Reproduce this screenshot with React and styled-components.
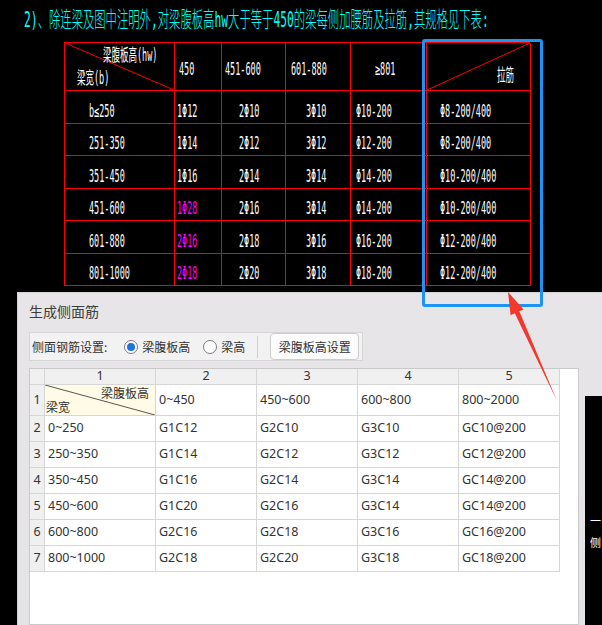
import React from 'react';
import styled, { createGlobalStyle } from 'styled-components';

const GlobalStyle = createGlobalStyle`
  html, body {
    margin: 0;
    padding: 0;
    background: #000;
  }
`;

const Root = styled.div`
  position: relative;
  width: 602px;
  height: 625px;
  overflow: hidden;
  background: #000;
  display: flex;
  flex-direction: column;
`;

// ---- CAD drawing part ----

const Title = styled.div`
  height: 42px;
  box-sizing: border-box;
  padding: 9px 0 0 24px;
  white-space: nowrap;
`;

const TitleText = styled.span`
  display: inline-block;
  font-family: "DejaVu Sans Mono", "Noto Sans CJK SC", monospace;
  font-size: 22px;
  line-height: 22px;
  font-weight: 300;
  color: #00ffff;
  transform: scaleX(0.515);
  transform-origin: left center;
`;

const CadTable = styled.div`
  margin-left: 64px;
  display: grid;
  grid-template-columns: 110px 47px 64px 65px 76px 104px;
  grid-template-rows: 48px repeat(6, 32.5px);
  width: 466px;
  border-top: 1px solid #ff0000;
  border-left: 1px solid #ff0000;
  box-sizing: border-box;
`;

const CadCell = styled.div`
  position: relative;
  display: flex;
  align-items: center;
  box-sizing: border-box;
  border-right: 1px solid #ff0000;
  border-bottom: 1px solid #ff0000;
  padding-left: ${p => p.$pl || 0}px;
  padding-top: ${p => p.$pt || 0}px;
  overflow: visible;
`;

const CadHeadCell = styled(CadCell)`
  flex-direction: column;
  align-items: flex-start;
  justify-content: flex-start;
`;

const CadText = styled.span`
  display: inline-block;
  font-family: "DejaVu Sans Mono", "Noto Sans CJK SC", monospace;
  font-size: 17px;
  line-height: 17px;
  color: ${p => p.$color || '#ffffff'};
  white-space: nowrap;
  transform: scaleX(0.5);
  transform-origin: left center;
  margin-left: ${p => p.$ml || 0}px;
  margin-top: ${p => p.$mt || 0}px;
`;

const Diagonal = styled.svg`
  position: absolute;
  left: 0;
  top: 0;
  width: 100%;
  height: 100%;
`;

// ---- dialog part ----

const Dialog = styled.div`
  margin: 6px 0 0 17px;
  width: 620px;
  flex: 1;
  box-sizing: border-box;
  background: linear-gradient(180deg, #e7e5e8 0%, #e4e3e5 100%);
  border-left: 1px solid #d2d2d2;
  border-top: 1px solid #d2d2d2;
  padding-left: 11px;
  font-family: "Noto Sans", "Noto Sans CJK SC", sans-serif;
  color: #333;
  display: flex;
  flex-direction: column;
`;

const DialogTitle = styled.div`
  font-size: 14px;
  line-height: 20px;
  padding-top: 8px;
  color: #3d3d3d;
  font-family: "Noto Sans CJK SC", sans-serif;
`;

const GroupBox = styled.div`
  margin-top: 11px;
  width: 334px;
  height: 29px;
  box-sizing: border-box;
  border: 1px solid #d6d6d6;
  background: #f3f2f3;
  display: flex;
  align-items: center;
  padding-left: 2px;
  font-size: 12px;
  font-family: "Noto Sans CJK SC", sans-serif;
`;

const Label = styled.span`
  margin-left: ${p => p.$ml || 0}px;
  white-space: nowrap;
`;

const Radio = styled.span`
  width: 14px;
  height: 14px;
  box-sizing: border-box;
  border-radius: 50%;
  border: 1px solid #7a7a7a;
  background: #fff;
  margin-left: ${p => p.$ml || 0}px;
  margin-right: 4px;
  display: flex;
  align-items: center;
  justify-content: center;
  &::after {
    content: '';
    width: 8px;
    height: 8px;
    border-radius: 50%;
    background: ${p => (p.$checked ? '#1f74e0' : 'transparent')};
  }
`;

const Separator = styled.span`
  width: 1px;
  height: 22px;
  background: #d0d0d0;
  margin-left: 12px;
`;

const Button = styled.span`
  margin-left: 12px;
  width: 89px;
  height: 27px;
  box-sizing: border-box;
  border: 1px solid #cdcdcd;
  border-radius: 4px;
  background: #fcfcfc;
  display: flex;
  align-items: center;
  justify-content: center;
  white-space: nowrap;
`;

const GridBox = styled.div`
  margin-top: 7px;
  width: 550px;
  flex: 1;
  box-sizing: border-box;
  background: #fff;
  border: 1px solid #c9c9c9;
`;

const Grid = styled.div`
  display: grid;
  grid-template-columns: 15px 111px 101px 101px 101px 101px;
  grid-template-rows: 16px 31px repeat(6, 26px);
  font-size: 12.5px;
`;

const GridCell = styled.div`
  position: relative;
  box-sizing: border-box;
  border-right: 1px solid #d6d6d6;
  border-bottom: 1px solid #d6d6d6;
  display: flex;
  align-items: center;
  justify-content: ${p => (p.$center ? 'center' : 'flex-start')};
  padding-left: ${p => (p.$center ? 0 : 3)}px;
  background: ${p => p.$bg || '#fff'};
  white-space: nowrap;
  line-height: 1;
`;

const CornerCell = styled(GridCell)`
  background: #fffbe6;
  flex-direction: column;
  align-items: stretch;
  justify-content: space-between;
  padding: 0;
  font-family: "Noto Sans CJK SC", sans-serif;
  font-size: 12px;
`;

const CornerText = styled.span`
  position: relative;
  text-align: ${p => p.$align};
  padding: ${p => p.$pad};
  line-height: 14px;
`;

// ---- overlays ----

const Highlight = styled.div`
  position: absolute;
  left: 422px;
  top: 39px;
  width: 121px;
  height: 268px;
  box-sizing: border-box;
  border: 3px solid #1e93f6;
  border-radius: 3px;
`;

const ArrowSvg = styled.svg`
  position: absolute;
  left: 0;
  top: 0;
  width: 602px;
  height: 625px;
  pointer-events: none;
`;

const SideWindow = styled.div`
  position: absolute;
  left: 585px;
  top: 396px;
  width: 17px;
  height: 230px;
  background: #000;
  color: #fff;
  font-family: "Noto Sans CJK SC", sans-serif;
  font-size: 11px;
  display: flex;
  flex-direction: column;
  padding: 113px 0 0 5px;
  box-sizing: border-box;
  line-height: 22px;
`;

const cadHeader = [
  { text: '450', pl: 4 },
  { text: '451-600', pl: 3 },
  { text: '601-880', pl: 5 },
  { text: '≥801', pl: 24 },
];

const cadRows = [
  ['b≤250', '1Φ12', '2Φ10', '3Φ10', 'Φ10-200', 'Φ8-200/400'],
  ['251-350', '1Φ14', '2Φ12', '3Φ12', 'Φ12-200', 'Φ8-200/400'],
  ['351-450', '1Φ16', '2Φ14', '3Φ14', 'Φ14-200', 'Φ10-200/400'],
  ['451-600', '1Φ28', '2Φ16', '3Φ14', 'Φ14-200', 'Φ10-200/400'],
  ['601-880', '2Φ16', '2Φ18', '3Φ16', 'Φ16-200', 'Φ12-200/400'],
  ['801-1000', '2Φ18', '2Φ20', '3Φ18', 'Φ18-200', 'Φ12-200/400'],
];

const cadPad = [24, 2, 17, 20, 5, 13];

const gridRows = [
  ['0~250', 'G1C12', 'G2C10', 'G3C10', 'GC10@200'],
  ['250~350', 'G1C14', 'G2C12', 'G3C12', 'GC12@200'],
  ['350~450', 'G1C16', 'G2C14', 'G3C14', 'GC14@200'],
  ['450~600', 'G1C20', 'G2C16', 'G3C14', 'GC14@200'],
  ['600~800', 'G2C16', 'G2C18', 'G3C16', 'GC16@200'],
  ['800~1000', 'G2C18', 'G2C20', 'G3C18', 'GC18@200'],
];

function CadDrawing() {
  return (
    <CadTable>
      <CadHeadCell>
        <Diagonal viewBox="0 0 100 100" preserveAspectRatio="none">
          <line x1="0" y1="0" x2="100" y2="100" stroke="#ff0000" strokeWidth="1" vectorEffect="non-scaling-stroke" />
        </Diagonal>
        <CadText $ml={38} $mt={4}>梁腹板高(hw)</CadText>
        <CadText $ml={12} $mt={6}>梁宽(b)</CadText>
      </CadHeadCell>
      {cadHeader.map(h => (
        <CadCell key={h.text} $pl={h.pl} $pt={6}>
          <CadText>{h.text}</CadText>
        </CadCell>
      ))}
      <CadHeadCell>
        <Diagonal viewBox="0 0 100 100" preserveAspectRatio="none">
          <line x1="0" y1="100" x2="100" y2="0" stroke="#ff0000" strokeWidth="1" vectorEffect="non-scaling-stroke" />
        </Diagonal>
        <CadText $ml={70} $mt={24}>拉筋</CadText>
      </CadHeadCell>
      {cadRows.map((row, r) =>
        row.map((cell, c) => (
          <CadCell key={`${r}-${c}`} $pl={cadPad[c]} $pt={9}>
            <CadText $color={c === 1 && r >= 3 ? '#ff00ff' : '#ffffff'}>{cell}</CadText>
          </CadCell>
        ))
      )}
    </CadTable>
  );
}

function SideBarGrid() {
  return (
    <GridBox>
      <Grid>
        <GridCell $bg="#f0f0f0" />
        {[1, 2, 3, 4, 5].map(n => (
          <GridCell key={n} $center $bg="#f0f0f0">{n}</GridCell>
        ))}
        <GridCell $center $bg="#f0f0f0">1</GridCell>
        <CornerCell>
          <Diagonal viewBox="0 0 100 100" preserveAspectRatio="none">
            <line x1="0" y1="0" x2="100" y2="100" stroke="#555" strokeWidth="1" vectorEffect="non-scaling-stroke" />
          </Diagonal>
          <CornerText $align="right" $pad="1px 6px 0 0">梁腹板高</CornerText>
          <CornerText $align="left" $pad="0 0 1px 1px">梁宽</CornerText>
        </CornerCell>
        {['0~450', '450~600', '600~800', '800~2000'].map(t => (
          <GridCell key={t}>{t}</GridCell>
        ))}
        {gridRows.map((row, r) => (
          <React.Fragment key={r}>
            <GridCell $center $bg="#f0f0f0">{r + 2}</GridCell>
            {row.map((cell, c) => (
              <GridCell key={c}>{cell}</GridCell>
            ))}
          </React.Fragment>
        ))}
      </Grid>
    </GridBox>
  );
}

export default function App() {
  return (
    <>
      <GlobalStyle />
      <Root>
        <Title>
          <TitleText>2)、除连梁及图中注明外,对梁腹板高hw大于等于450的梁每侧加腰筋及拉筋,其规格见下表:</TitleText>
        </Title>
        <CadDrawing />
        <Dialog>
          <DialogTitle>生成侧面筋</DialogTitle>
          <GroupBox>
            <Label>侧面钢筋设置:</Label>
            <Radio $ml={17} $checked />
            <Label>梁腹板高</Label>
            <Radio $ml={13} />
            <Label>梁高</Label>
            <Separator />
            <Button>梁腹板高设置</Button>
          </GroupBox>
          <SideBarGrid />
        </Dialog>
        <SideWindow>
          <span>一</span>
          <span>侧</span>
        </SideWindow>
        <Highlight />
        <ArrowSvg viewBox="0 0 602 625">
          <polygon
            points="508,292 523.6,309.5 519.3,311.2 557,401 514.8,313.2 510.6,315.2"
            fill="#f4372b"
          />
        </ArrowSvg>
      </Root>
    </>
  );
}
